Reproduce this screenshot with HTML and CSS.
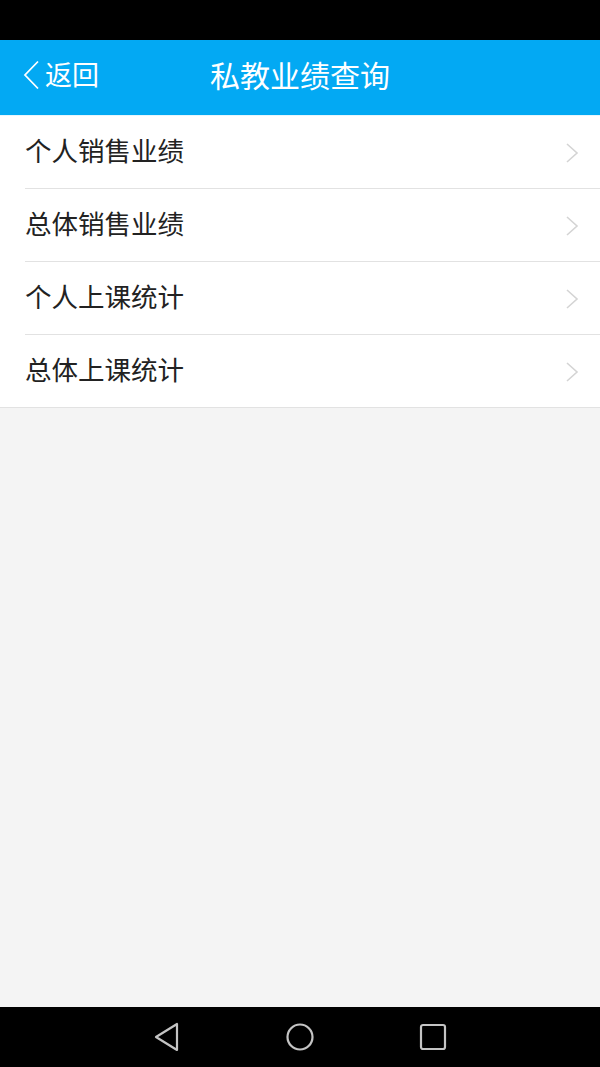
FILE: index.html
```html
<!DOCTYPE html>
<html lang="zh-CN">
<head>
    <meta charset="UTF-8">
    <meta name="viewport" content="width=device-width, initial-scale=1.0">
    <title>私教业绩查询</title>
    <link rel="stylesheet" href="styles.css">
</head>
<body>
    <div class="status-bar"></div>

    <!-- Title bar -->
    <div class="title-bar">
        <a class="back" href="#">
            <svg class="back-arrow" width="18" height="30" viewBox="0 0 18 30">
                <polyline points="16,1.5 3,15 16,28.5" fill="none" stroke="#fff" stroke-width="1.8"/>
            </svg>
            <span>返回</span>
        </a>
        <h1>私教业绩查询</h1>
    </div>

    <ul class="menu">
        <li class="menu-item"><span>个人销售业绩</span><svg class="chevron" width="14" height="22" viewBox="0 0 14 22"><polyline points="2,2 12,11 2,20" fill="none" stroke="#d4d4d4" stroke-width="1.6"/></svg></li>
        <li class="menu-item"><span>总体销售业绩</span><svg class="chevron" width="14" height="22" viewBox="0 0 14 22"><polyline points="2,2 12,11 2,20" fill="none" stroke="#d4d4d4" stroke-width="1.6"/></svg></li>
        <li class="menu-item"><span>个人上课统计</span><svg class="chevron" width="14" height="22" viewBox="0 0 14 22"><polyline points="2,2 12,11 2,20" fill="none" stroke="#d4d4d4" stroke-width="1.6"/></svg></li>
        <li class="menu-item"><span>总体上课统计</span><svg class="chevron" width="14" height="22" viewBox="0 0 14 22"><polyline points="2,2 12,11 2,20" fill="none" stroke="#d4d4d4" stroke-width="1.6"/></svg></li>
    </ul>

    <div class="content"></div>

    <!-- Android navigation buttons -->
    <div class="nav-bar">
        <svg width="28" height="30" viewBox="0 0 28 30">
            <polygon points="24,2 24,28 3,15" fill="none" stroke="#c4c4c4" stroke-width="2.2" stroke-linejoin="round"/>
        </svg>
        <svg width="30" height="30" viewBox="0 0 30 30">
            <circle cx="15" cy="15" r="12.5" fill="none" stroke="#c4c4c4" stroke-width="2.2"/>
        </svg>
        <svg width="28" height="28" viewBox="0 0 28 28">
            <rect x="2" y="2" width="24" height="24" rx="2" fill="none" stroke="#c4c4c4" stroke-width="2.2"/>
        </svg>
    </div>
</body>
</html>
```

FILE: styles.css
```css
body {
    margin: 0;
    width: 600px;
    height: 1067px;
    display: flex;
    flex-direction: column;
    background-color: #f4f4f4;
    font-family: "Noto Sans CJK SC", "Noto Sans", sans-serif;
}

.status-bar {
    height: 40px;
    background-color: #000;
}

.title-bar {
    position: relative;
    height: 75px;
    background-color: #03a9f3;
    border-bottom: 1px solid #e8f6fd;
    display: flex;
    align-items: center;
    justify-content: center;
    color: #fff;
}

.title-bar h1 {
    margin: 0 0 8px;
    font-size: 30px;
    font-weight: normal;
    line-height: 1;
}

.back {
    position: absolute;
    left: 22px;
    top: 20px;
    display: flex;
    align-items: center;
    gap: 5px;
    color: #fff;
    text-decoration: none;
    font-size: 27px;
    line-height: 30px;
}

.back span {
    margin-top: -3px;
}

.menu {
    list-style: none;
    margin: 0;
    padding: 0;
    background-color: #fff;
    border-bottom: 1px solid #e2e2e2;
}

.menu-item {
    height: 72px;
    margin-left: 25px;
    padding-right: 21px;
    display: flex;
    align-items: center;
    justify-content: space-between;
    font-size: 26.5px;
    color: #222;
    border-bottom: 1px solid #e2e2e2;
}

.menu-item:last-child {
    border-bottom: none;
}

.menu-item span {
    margin-top: -5px;
}

.chevron {
    margin-top: 2px;
}

.content {
    flex: 1;
}

.nav-bar {
    height: 60px;
    background-color: #000;
    display: flex;
    align-items: center;
    justify-content: center;
    gap: 104px;
}
```
